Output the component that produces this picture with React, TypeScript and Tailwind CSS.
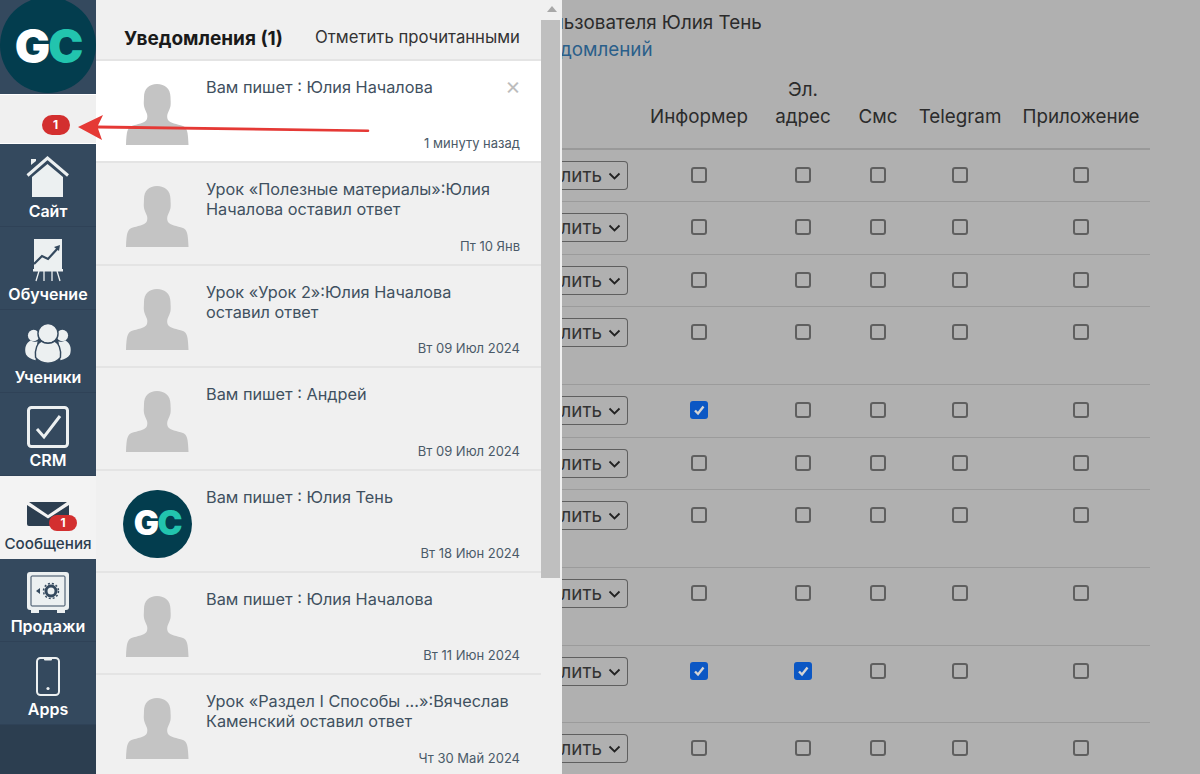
const FONT = "font-['Inter','Noto_Sans',sans-serif]";

function Logo({ size }: { size: 'lg' | 'sm' }) {
  const lg = size === 'lg';
  return (
    <div className={lg ? 'flex h-[96px] w-[96px] -mt-[3px] items-center justify-center rounded-full bg-[#033d4e]' : 'flex h-[68px] w-[69px] items-center justify-center rounded-full bg-[#033d4e]'}>
      <span className={lg ? "text-[47px] leading-none font-black tracking-[-2px] text-white font-['Inter',sans-serif]" : "text-[33.500px] leading-none font-black tracking-[-1.500px] text-white font-['Inter',sans-serif]"}>
        G<span className="text-[#22c4ae]">C</span>
      </span>
    </div>
  );
}

const Person = () => (
  <svg width="63" height="61" viewBox="0 0 63 61" className="shrink-0">
    <path
      fill="#c4c4c4"
      d="M31 0c8 0 13.500 5 13.500 13 0 3 .5 6 0 9-.5 3-2 5-3 8-.5 2-.5 4 .5 6 2 3 9 4 15 6 4 2 5 5 5.500 19H0c.5-14 1.500-17 5.500-19 6-2 13-3 15-6 1-2 1-4 .5-6-1-3-2.500-5-3-8-.5-3 0-6 0-9C18 5 23 0 31 0z"
    />
  </svg>
);

function HouseIcon() {
  return (
    <svg width="44" height="45" viewBox="0 0 44 45" fill="none">
      <path d="M1.500 19.500 21.500 2l20.500 17.500" stroke="#ecf0f1" strokeWidth="3" />
      <path d="M5 9V3h5v2z" fill="#ecf0f1" />
      <path d="M6 21 21.500 8 37 21v20H6z" fill="#ecf0f1" />
    </svg>
  );
}
function BoardIcon() {
  return (
    <svg width="30" height="45" viewBox="0 0 30 45" fill="none">
      <path d="M1 0h28v30H1z" fill="#ecf0f1" />
      <path d="M0 30h30v2.500H0z" fill="#ecf0f1" />
      <path d="M1 25l8-8 6 3 10-11" stroke="#34495e" strokeWidth="2.200" />
      <path d="M21 8l6-2-1 6z" fill="#34495e" />
      <path d="M6 32 3 42M11 32v10M19 32v10M24 32l3 10" stroke="#ecf0f1" strokeWidth="1.300" />
    </svg>
  );
}
function UsersIcon() {
  return (
    <svg width="48" height="44" viewBox="0 0 50 46" fill="#ecf0f1">
      <circle cx="10" cy="13" r="6" />
      <circle cx="40" cy="13" r="6" />
      <path d="M2 33c-2-7 0-12 5-15 3 2 5 2 7 1l-2 20c-5-1-8-3-10-6zM48 33c2-7 0-12-5-15-3 2-5 2-7 1l2 20c5-1 8-3 10-6z" />
      <circle cx="25" cy="11" r="10.500" stroke="#34495e" strokeWidth="1.500" />
      <path d="M12 36c-1-9 2-15 6-17 4 3 10 3 14 0 4 2 7 8 6 17-3 4-8 6-13 6s-10-2-13-6z" stroke="#34495e" strokeWidth="1.500" />
    </svg>
  );
}
function CrmIcon() {
  return (
    <svg width="42" height="44" viewBox="0 0 42 44" fill="none">
      <rect x="1.500" y="1.500" width="39" height="39" rx="3" stroke="#ecf0f1" strokeWidth="3" />
      <path d="M10 23l7 8L33 10" stroke="#ecf0f1" strokeWidth="3" />
    </svg>
  );
}
function MailIcon() {
  return (
    <svg width="42" height="24" viewBox="0 0 42 24" className="block">
      <path d="M2 0h38L21 13z" fill="#2c3e50" />
      <path d="M0 3l21 13.500L42 3v19a2 2 0 0 1-2 2H2a2 2 0 0 1-2-2z" fill="#2c3e50" />
    </svg>
  );
}
function SafeIcon() {
  return (
    <svg width="42" height="44" viewBox="0 0 42 44" fill="none">
      <rect width="42" height="38" rx="3" fill="#ecf0f1" />
      <path d="M4 38h8v3H4zM30 38h8v3h-8z" fill="#ecf0f1" />
      <rect x="4" y="4" width="34" height="30" rx="1" stroke="#34495e" strokeWidth="1" />
      <circle cx="24" cy="19" r="5" stroke="#34495e" strokeWidth="3" />
      <circle cx="24" cy="19" r="7.500" stroke="#34495e" strokeWidth="1.500" strokeDasharray="2 2" />
      <path d="M9 19l4-3v6z" fill="#34495e" />
    </svg>
  );
}
function PhoneIcon() {
  return (
    <svg width="24" height="42" viewBox="0 0 24 42" fill="none">
      <rect x="1" y="1" width="22" height="37" rx="3.500" stroke="#ecf0f1" strokeWidth="2" />
      <path d="M8 1h8v1.500a1 1 0 0 1-1 1H9a1 1 0 0 1-1-1z" fill="#ecf0f1" />
      <circle cx="12" cy="31.500" r="1.600" fill="#ecf0f1" />
    </svg>
  );
}

function NavItem({ label, icon, active }: { label: string; icon: React.ReactNode; active?: boolean }) {
  return (
    <div className={active ? 'flex h-[83px] flex-col items-center bg-[#f3f3f3]' : 'flex h-[83px] flex-col items-center border-b border-[#2f4257] bg-[#34495e]'}>
      <div className="flex h-[58px] items-end justify-center pb-[1px]">{icon}</div>
      <div className={active ? 'text-[15.200px] leading-[20px] font-medium text-[#2c3e50]' : '-mt-[1px] text-[16px] leading-[20px] font-semibold text-white'}>{label}</div>
    </div>
  );
}

function Sidebar() {
  return (
    <div className="flex h-full w-[96px] shrink-0 flex-col bg-[#2c3e50]">
      <div className="h-[94px] overflow-hidden bg-[#34495e]">
        <Logo size="lg" />
      </div>
      <div className="flex h-[50px] items-end justify-center border-y border-white bg-[#f0f0f0] pb-[8px] pl-[15px]">
        <span className="flex h-[20px] w-[28px] items-center justify-center rounded-full bg-[#d32f2f] text-[12px] font-bold text-white">1</span>
      </div>
      <NavItem label="Сайт" icon={<HouseIcon />} />
      <NavItem label="Обучение" icon={<BoardIcon />} />
      <NavItem label="Ученики" icon={<UsersIcon />} />
      <NavItem label="CRM" icon={<CrmIcon />} />
      <NavItem
        active
        label="Сообщения"
        icon={
          <div className="relative mb-[7px]">
            <MailIcon />
            <span className="absolute -right-[8px] top-[13px] flex h-[16px] w-[28px] items-center justify-center rounded-full bg-[#d32f2f] text-[12px] leading-none font-bold text-white">1</span>
          </div>
        }
      />
      <NavItem label="Продажи" icon={<SafeIcon />} />
      <NavItem label="Apps" icon={<PhoneIcon />} />
    </div>
  );
}

type Note = { lines: string[]; date: string; unread?: boolean; logo?: boolean };
const notes: Note[] = [
  { lines: ['Вам пишет : Юлия Началова'], date: '1 минуту назад', unread: true },
  { lines: ['Урок «Полезные материалы»:Юлия', 'Началова оставил ответ'], date: 'Пт 10 Янв' },
  { lines: ['Урок «Урок 2»:Юлия Началова', 'оставил ответ'], date: 'Вт 09 Июл 2024' },
  { lines: ['Вам пишет : Андрей'], date: 'Вт 09 Июл 2024' },
  { lines: ['Вам пишет : Юлия Тень'], date: 'Вт 18 Июн 2024', logo: true },
  { lines: ['Вам пишет : Юлия Началова'], date: 'Вт 11 Июн 2024' },
  { lines: ['Урок «Раздел I Способы ...»:Вячеслав', 'Каменский оставил ответ'], date: 'Чт 30 Май 2024' },
];

function NoteRow({ n }: { n: Note }) {
  return (
    <div className={n.unread ? 'relative flex h-[102.400px] shrink-0 border-b-2 border-[#e4e4e4] bg-white' : 'relative flex h-[102.400px] shrink-0 border-b-2 border-[#e4e4e4]'}>
      <div className={n.logo ? 'w-[110px] shrink-0 pl-[27px] pt-[19px]' : 'w-[110px] shrink-0 pl-[30px] pt-[23px]'}>
        {n.logo ? <Logo size="sm" /> : <Person />}
      </div>
      <div className="flex flex-1 flex-col pr-[21px] pt-[16px] text-[#3f5060]">
        <div className="flex-1 text-[16.300px] leading-[20px]">
          {n.lines.map((l) => (
            <div key={l}>{l}</div>
          ))}
        </div>
        <div className="pb-[9px] text-right text-[13px] leading-[18px] text-[#4a5a68]">{n.date}</div>
      </div>
      {n.unread && <span className="absolute right-[20px] top-[14px] text-[24px] leading-[22px] text-[#bdbdbd]">×</span>}
    </div>
  );
}

function Panel() {
  return (
    <div className="flex h-full w-[466px] shrink-0 bg-[#f0f0f0]">
      <div className="flex w-[445px] flex-col overflow-hidden">
        <div className="flex h-[61px] shrink-0 items-center justify-between border-b-2 border-[#e4e4e4] pl-[28px] pr-[21px] pt-[19px]">
          <span className="text-[19px] font-bold text-[#1a1a1a]">Уведомления (1)</span>
          <span className="pb-[3px] text-[16.700px] text-[#333333]">Отметить прочитанными</span>
        </div>
        {notes.map((n) => (
          <NoteRow key={n.lines[0] + n.date} n={n} />
        ))}
      </div>
      <div className="flex w-[21px] flex-col">
        <div className="flex h-[20px] justify-center pt-[6px]">
          <div className="h-0 w-0 border-x-[5px] border-b-[6px] border-x-transparent border-b-[#a8a8a8]" />
        </div>
        <div className="h-[558px] w-[19px] bg-[#bfbfbf]" />
      </div>
    </div>
  );
}

function Box({ on }: { on?: boolean }) {
  return on ? (
    <div className="flex h-[18px] w-[18px] items-center justify-center rounded-[3px] bg-[#0b57c4]">
      <svg width="12" height="12" viewBox="0 0 12 12" fill="none">
        <path d="M2 6.500 5 9.500 10.500 2.500" stroke="#d4d4d4" strokeWidth="2.400" />
      </svg>
    </div>
  ) : (
    <div className="h-[16px] w-[16px] rounded-[3px] border-2 border-[#5f5f5f]" />
  );
}

const rows: { h: string; checks: boolean[] }[] = [
  { h: 'h-[52px]', checks: [false, false] },
  { h: 'h-[53px]', checks: [false, false] },
  { h: 'h-[52px]', checks: [false, false] },
  { h: 'h-[78px]', checks: [false, false] },
  { h: 'h-[53px]', checks: [true, false] },
  { h: 'h-[52px]', checks: [false, false] },
  { h: 'h-[78px]', checks: [false, false] },
  { h: 'h-[78px]', checks: [false, false] },
  { h: 'h-[77px]', checks: [true, true] },
  { h: 'h-[52px]', checks: [false, false] },
];

function TableRow({ h, checks }: { h: string; checks: boolean[] }) {
  return (
    <div className={`grid ${h} grid-cols-[78px_118px_90px_60px_104px_138px] items-start border-b border-[#9b9b9b]`}>
      <div className="mt-[11px] flex h-[29px] items-center justify-end gap-[6px] rounded-r-[4px] border-y border-r border-[#5f5f5f] pr-[6px] text-[18.800px] text-[#333333] -ml-[20px] w-[86px]">
        <span className="pt-[2px]">лить</span>
        <svg width="13" height="8" viewBox="0 0 13 8" fill="none">
          <path d="M1.500 1.500 6.500 6.500 11.500 1.500" stroke="#222222" strokeWidth="1.800" />
        </svg>
      </div>
      {[checks[0], checks[1], false, false, false].map((on, i) => (
        <div key={i} className="mt-[16px] flex h-[18px] items-center justify-center">
          <Box on={on} />
        </div>
      ))}
    </div>
  );
}

function Main() {
  return (
    <div className="h-full flex-1 overflow-hidden bg-[#b0b0b0] text-[#2b2b2b]">
      <div className="h-[62px] pt-[9px] text-[18.800px] leading-[27px]">
        <div className="-ml-[9px]">льзователя Юлия Тень</div>
        <div className="-ml-[2px] text-[#2a5f8a]">домлений</div>
      </div>
      <div className="w-[588px]">
        <div className="grid h-[88px] grid-cols-[78px_118px_90px_60px_104px_138px] items-end border-b-2 border-[#999999] pb-[18px] text-center text-[18.800px] leading-[27px]">
          <div />
          <div>Информер</div>
          <div>
            Эл.
            <br />
            адрес
          </div>
          <div>Смс</div>
          <div>Telegram</div>
          <div>Приложение</div>
        </div>
        {rows.map((r, i) => (
          <TableRow key={i} h={r.h} checks={r.checks} />
        ))}
      </div>
    </div>
  );
}

export default function App() {
  return (
    <div className={`relative flex h-[774px] w-[1200px] overflow-hidden ${FONT}`}>
      <Sidebar />
      <Panel />
      <Main />
      <svg className="absolute left-[76px] top-[112px]" width="298" height="30" viewBox="0 0 298 30" fill="none">
        <path d="M2 15 27 3 22 13.500 292 17.500a1.300 1.300 0 0 1 0 2.600L22 16.500 26 28z" fill="#e53935" />
      </svg>
    </div>
  );
}
